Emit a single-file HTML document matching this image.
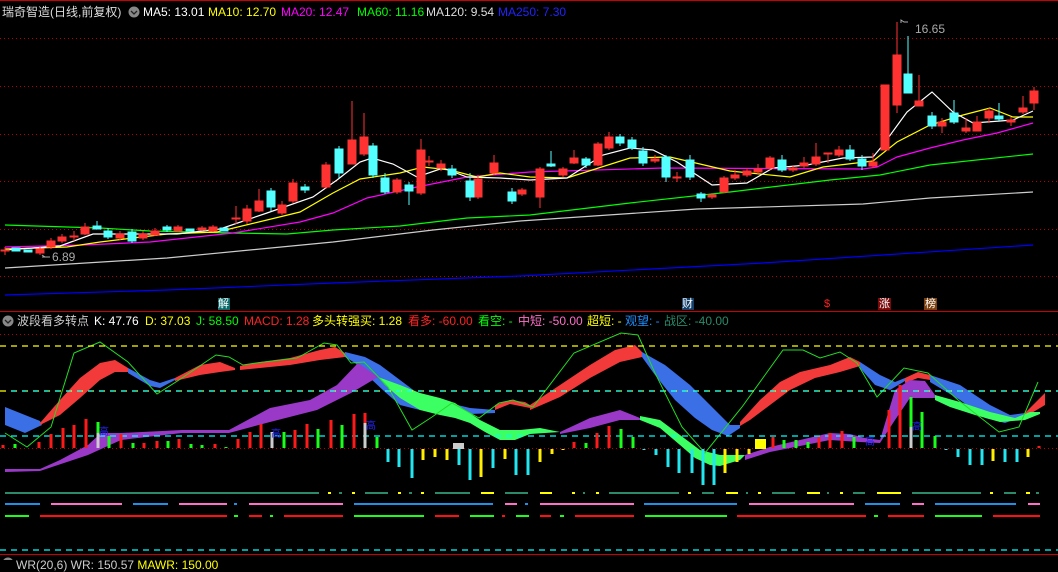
<!DOCTYPE html>
<html><head><meta charset="utf-8"><style>
html,body{margin:0;padding:0;background:#000;width:1058px;height:560px;overflow:hidden}
.t{position:absolute;font:12px "Liberation Sans","Noto Sans CJK SC",sans-serif;white-space:nowrap;line-height:14px}
svg{position:absolute;left:0;top:0}
</style></head><body>
<svg width="1058" height="560" viewBox="0 0 1058 560">
<g stroke="#b00" stroke-dasharray="1 3" stroke-width="1">
<line x1="0" y1="38.5" x2="1058" y2="38.5"/><line x1="0" y1="86.5" x2="1058" y2="86.5"/><line x1="0" y1="134.5" x2="1058" y2="134.5"/><line x1="0" y1="181.5" x2="1058" y2="181.5"/><line x1="0" y1="229.5" x2="1058" y2="229.5"/><line x1="0" y1="276.5" x2="1058" y2="276.5"/>
<line x1="0" y1="334.5" x2="1058" y2="334.5"/><line x1="0" y1="448.5" x2="1058" y2="448.5"/>
</g>
<line x1="0" y1="0.5" x2="1058" y2="0.5" stroke="#c00"/>
<line x1="0" y1="311.5" x2="1058" y2="311.5" stroke="#c00"/>
<line x1="0" y1="554.5" x2="1058" y2="554.5" stroke="#c00"/>
<g fill="none" stroke-width="1.2">
<polyline stroke="#00f" points="5,295 167,290 333,283 520,276 763,263 1033,245"/>
<polyline stroke="#ccc" points="5,268 167,258 333,242 433,230 520,221 697,209 863,204 930,198 1033,192"/>
<polyline stroke="#0f0" points="5,225 67,227 100,228 150,231 233,233 287,234 333,230 400,226 467,218 530,215 630,203 730,192 830,180 880,175 930,165 1033,154"/>
<polyline stroke="#f0f" points="5,247 83,245 150,242 233,233 300,222 333,213 367,198 417,187 467,177 530,172 663,168 863,169 877,167 897,157 930,148 963,140 997,133 1033,123"/>
<polyline stroke="#ff0" points="5,249 67,247 100,242 133,238 167,234 217,232 267,220 300,212 333,193 360,179 400,173 423,167 450,170 477,177 500,173 530,177 567,178 630,158 670,157 730,171 790,177 823,167 873,161 897,142 930,125 963,115 990,108 1013,117 1033,117"/>
<polyline stroke="#fff" points="5,250 60,246 93,234 133,234 177,234 220,229 267,213 313,197 337,180 360,162 372,158 393,164 417,177 443,168 467,177 500,178 530,180 567,178 603,155 630,148 653,150 677,162 712,185 747,183 773,168 807,165 843,158 873,157 883,145 907,112 932,92 953,112 973,123 1000,121 1013,120 1033,111"/>
</g>
<g stroke-width="1">
<g fill="#ff3232" stroke="#ff3232">
<line x1="5" y1="247" x2="5" y2="255"/><rect x="1" y="250" width="8" height="1"/>
<line x1="40" y1="247" x2="40" y2="255"/><rect x="36" y="249" width="8" height="4"/>
<line x1="51" y1="238" x2="51" y2="249"/><rect x="47" y="241" width="8" height="6"/>
<line x1="62" y1="234" x2="62" y2="243"/><rect x="58" y="237" width="8" height="4"/>
<line x1="74" y1="231" x2="74" y2="241"/><rect x="70" y="236" width="8" height="1"/>
<line x1="85" y1="223" x2="85" y2="235"/><rect x="81" y="227" width="8" height="7"/>
<line x1="120" y1="231" x2="120" y2="240"/><rect x="116" y="234" width="8" height="4"/>
<line x1="143" y1="231" x2="143" y2="240"/><rect x="139" y="234" width="8" height="4"/>
<line x1="155" y1="228" x2="155" y2="236"/><rect x="151" y="231" width="8" height="4"/>
<line x1="178" y1="225" x2="178" y2="232"/><rect x="174" y="227" width="8" height="4"/>
<line x1="202" y1="226" x2="202" y2="231"/><rect x="198" y="228" width="8" height="2"/>
<line x1="213" y1="225" x2="213" y2="232"/><rect x="209" y="227" width="8" height="4"/>
<line x1="236" y1="206" x2="236" y2="224"/><rect x="232" y="218" width="8" height="1"/>
<line x1="247" y1="205" x2="247" y2="224"/><rect x="243" y="209" width="8" height="12"/>
<line x1="259" y1="189" x2="259" y2="212"/><rect x="255" y="201" width="8" height="10"/>
<line x1="282" y1="201" x2="282" y2="215"/><rect x="278" y="205" width="8" height="8"/>
<line x1="293" y1="179" x2="293" y2="203"/><rect x="289" y="183" width="8" height="18"/>
<line x1="326" y1="162" x2="326" y2="189"/><rect x="322" y="165" width="8" height="22"/>
<line x1="352" y1="101" x2="352" y2="164"/><rect x="348" y="140" width="8" height="24"/>
<line x1="364" y1="113" x2="364" y2="156"/><rect x="360" y="137" width="8" height="17"/>
<line x1="397" y1="178" x2="397" y2="194"/><rect x="393" y="180" width="8" height="12"/>
<line x1="421" y1="139" x2="421" y2="195"/><rect x="417" y="150" width="8" height="43"/>
<line x1="429" y1="156" x2="429" y2="166"/><rect x="425" y="161" width="8" height="1"/>
<line x1="441" y1="160" x2="441" y2="171"/><rect x="437" y="164" width="8" height="4"/>
<line x1="478" y1="175" x2="478" y2="199"/><rect x="474" y="179" width="8" height="18"/>
<line x1="494" y1="155" x2="494" y2="175"/><rect x="490" y="163" width="8" height="10"/>
<line x1="522" y1="188" x2="522" y2="196"/><rect x="518" y="190" width="8" height="4"/>
<line x1="540" y1="167" x2="540" y2="208"/><rect x="536" y="169" width="8" height="28"/>
<line x1="563" y1="167" x2="563" y2="177"/><rect x="559" y="169" width="8" height="6"/>
<line x1="574" y1="150" x2="574" y2="164"/><rect x="570" y="158" width="8" height="5"/>
<line x1="598" y1="142" x2="598" y2="166"/><rect x="594" y="144" width="8" height="21"/>
<line x1="609" y1="132" x2="609" y2="150"/><rect x="605" y="137" width="8" height="11"/>
<line x1="655" y1="155" x2="655" y2="163"/><rect x="651" y="159" width="8" height="2"/>
<line x1="677" y1="172" x2="677" y2="182"/><rect x="673" y="177" width="8" height="1"/>
<line x1="712" y1="193" x2="712" y2="199"/><rect x="708" y="195" width="8" height="2"/>
<line x1="724" y1="176" x2="724" y2="193"/><rect x="720" y="178" width="8" height="14"/>
<line x1="735" y1="170" x2="735" y2="180"/><rect x="731" y="175" width="8" height="3"/>
<line x1="747" y1="168" x2="747" y2="177"/><rect x="743" y="171" width="8" height="4"/>
<line x1="758" y1="164" x2="758" y2="174"/><rect x="754" y="169" width="8" height="3"/>
<line x1="770" y1="156" x2="770" y2="170"/><rect x="766" y="158" width="8" height="10"/>
<line x1="793" y1="166" x2="793" y2="172"/><rect x="789" y="168" width="8" height="2"/>
<line x1="804" y1="157" x2="804" y2="168"/><rect x="800" y="163" width="8" height="3"/>
<line x1="816" y1="143" x2="816" y2="166"/><rect x="812" y="157" width="8" height="7"/>
<line x1="828" y1="153" x2="828" y2="163"/><rect x="824" y="153" width="8" height="1"/>
<line x1="839" y1="146" x2="839" y2="157"/><rect x="835" y="150" width="8" height="5"/>
<line x1="873" y1="153" x2="873" y2="168"/><rect x="869" y="162" width="8" height="4"/>
<line x1="885" y1="85" x2="885" y2="150"/><rect x="881" y="85" width="8" height="65"/>
<line x1="897" y1="22" x2="897" y2="113"/><rect x="893" y="55" width="8" height="50"/>
<line x1="919" y1="75" x2="919" y2="106"/><rect x="915" y="101" width="8" height="5"/>
<line x1="942" y1="118" x2="942" y2="133"/><rect x="938" y="122" width="8" height="4"/>
<line x1="966" y1="118" x2="966" y2="133"/><rect x="962" y="128" width="8" height="3"/>
<line x1="977" y1="116" x2="977" y2="131"/><rect x="973" y="122" width="8" height="9"/>
<line x1="989" y1="108" x2="989" y2="123"/><rect x="985" y="111" width="8" height="7"/>
<line x1="1011" y1="117" x2="1011" y2="126"/><rect x="1007" y="120" width="8" height="2"/>
<line x1="1023" y1="96" x2="1023" y2="114"/><rect x="1019" y="108" width="8" height="4"/>
<line x1="1034" y1="87" x2="1034" y2="110"/><rect x="1030" y="91" width="8" height="12"/>
</g>
<g fill="#54ffff" stroke="#54ffff">
<rect x="12" y="248" width="8" height="3"/><rect x="24" y="250" width="8" height="2"/>
<line x1="97" y1="221" x2="97" y2="229"/><rect x="93" y="226" width="8" height="3"/>
<line x1="108" y1="228" x2="108" y2="239"/><rect x="104" y="231" width="8" height="6"/>
<line x1="132" y1="229" x2="132" y2="243"/><rect x="128" y="232" width="8" height="9"/>
<line x1="167" y1="225" x2="167" y2="232"/><rect x="163" y="227" width="8" height="3"/>
<rect x="186" y="229" width="8" height="2"/><rect x="220" y="228" width="8" height="3"/>
<line x1="271" y1="188" x2="271" y2="211"/><rect x="267" y="191" width="8" height="16"/>
<line x1="305" y1="184" x2="305" y2="193"/><rect x="301" y="187" width="8" height="3"/>
<line x1="339" y1="146" x2="339" y2="178"/><rect x="335" y="149" width="8" height="24"/>
<line x1="373" y1="143" x2="373" y2="178"/><rect x="369" y="146" width="8" height="29"/>
<line x1="385" y1="173" x2="385" y2="194"/><rect x="381" y="178" width="8" height="14"/>
<line x1="409" y1="182" x2="409" y2="205"/><rect x="405" y="185" width="8" height="6"/>
<line x1="452" y1="165" x2="452" y2="178"/><rect x="448" y="169" width="8" height="6"/>
<line x1="470" y1="173" x2="470" y2="201"/><rect x="466" y="181" width="8" height="16"/>
<line x1="512" y1="188" x2="512" y2="204"/><rect x="508" y="192" width="8" height="9"/>
<line x1="551" y1="151" x2="551" y2="167"/><rect x="547" y="164" width="8" height="2"/>
<line x1="586" y1="157" x2="586" y2="168"/><rect x="582" y="159" width="8" height="6"/>
<line x1="620" y1="134" x2="620" y2="146"/><rect x="616" y="137" width="8" height="6"/>
<line x1="632" y1="137" x2="632" y2="150"/><rect x="628" y="140" width="8" height="8"/>
<line x1="643" y1="147" x2="643" y2="166"/><rect x="639" y="151" width="8" height="12"/>
<line x1="666" y1="155" x2="666" y2="182"/><rect x="662" y="157" width="8" height="20"/>
<line x1="690" y1="155" x2="690" y2="180"/><rect x="686" y="160" width="8" height="17"/>
<line x1="701" y1="192" x2="701" y2="202"/><rect x="697" y="194" width="8" height="4"/>
<line x1="782" y1="155" x2="782" y2="172"/><rect x="778" y="160" width="8" height="10"/>
<line x1="850" y1="145" x2="850" y2="161"/><rect x="846" y="150" width="8" height="9"/>
<line x1="862" y1="155" x2="862" y2="170"/><rect x="858" y="159" width="8" height="7"/>
<line x1="908" y1="36" x2="908" y2="93"/><rect x="904" y="74" width="8" height="19"/>
<line x1="932" y1="112" x2="932" y2="129"/><rect x="928" y="116" width="8" height="10"/>
<line x1="954" y1="100" x2="954" y2="124"/><rect x="950" y="113" width="8" height="9"/>
<line x1="999" y1="103" x2="999" y2="121"/><rect x="995" y="116" width="8" height="3"/>
</g></g>
<path d="M45 257 l-3 -2 M42 257 h8" stroke="#aaa" fill="none"/>
<path d="M901 23 v-3 l3 2 h4" stroke="#aaa" fill="none"/>
<rect x="218" y="298" width="12" height="12" fill="#0a6a6a"/>
<rect x="682" y="298" width="12" height="12" fill="#15406a"/>
<rect x="878" y="298" width="13" height="12" fill="#7a0a0a"/>
<rect x="924" y="298" width="13" height="12" fill="#7a4010"/>
<g fill="#3a6fe6">
<polygon points="5,407 40,421 42,425 25,433 5,425"/>
<polygon points="128,368 150,380 160,383 175,378 175,380 160,388 150,386 128,373"/>
<polygon points="345,352 365,357 380,365 400,380 420,395 445,402 470,408 495,410 495,413 470,414 445,413 420,410 400,405 385,392 370,378 355,363 345,357"/>
<polygon points="642,352 665,365 690,385 710,405 730,425 740,425 740,428 728,436 712,430 695,418 675,400 655,375 642,357"/>
<polygon points="860,362 880,375 895,382 905,378 905,381 890,390 875,385 860,368"/>
<polygon points="930,375 960,385 990,405 1010,415 1025,413 1025,416 1005,423 985,418 960,400 930,382"/>
</g>
<g fill="#f23a3a">
<polygon points="40,423 60,400 80,378 100,363 115,360 128,368 128,372 115,372 100,380 80,398 60,415 40,425"/>
<polygon points="175,378 200,365 220,362 235,368 235,370 220,372 200,375 175,381"/>
<polygon points="240,366 260,362 290,358 320,350 335,347 345,353 345,357 320,360 290,365 260,368 240,370"/>
<polygon points="495,405 510,400 525,402 530,405 530,408 510,404 495,410"/>
<polygon points="530,405 560,385 590,365 615,350 635,345 642,352 642,357 620,362 590,378 560,397 530,410"/>
<polygon points="740,422 760,400 780,382 800,372 830,365 850,357 860,362 860,366 840,372 815,378 790,390 770,405 750,420 740,426"/>
<polygon points="905,378 918,372 930,375 930,380 918,378 905,383"/>
<polygon points="1025,413 1045,393 1045,405 1025,417"/>
</g>
<g fill="#9a38c8">
<polygon points="5,469 40,469 60,460 88,445 101,433 121,433 182,430 229,430 270,408 310,400 337,385 358,363 378,377 351,393 317,410 270,422 229,433 182,433 121,440 88,455 40,471 5,472"/>
<polygon points="560,432 590,418 620,410 640,418 640,420 620,420 590,428 560,434"/>
<polygon points="745,455 770,447 800,440 830,433 850,434 865,438 880,440 895,390 910,380 925,381 935,395 935,398 910,398 895,420 880,443 860,442 830,440 800,446 770,452 745,460"/>
</g>
<g fill="#3cff64">
<polygon points="378,377 400,385 420,393 440,398 455,403 465,410 480,420 500,430 520,430 540,428 560,432 530,434 515,440 500,440 485,432 470,423 455,418 440,415 420,410 400,398 385,385"/>
<polygon points="640,416 660,420 680,435 700,450 720,455 745,455 740,460 720,466 710,465 695,458 680,445 660,428 640,420"/>
<polygon points="935,395 960,402 990,412 1015,418 1030,412 1040,412 1040,414 1025,420 1000,422 975,415 950,407 935,400"/>
</g>
<polyline fill="none" stroke="#22dd22" stroke-width="1" points="5,433 27,447 51,427 74,353 100,342 128,362 157,394 179,380 216,355 229,357 243,365 256,363 297,358 324,343 337,345 351,363 364,362 388,387 412,430 432,417 452,403 479,418 499,403 513,400 533,407 574,353 621,333 638,335 655,373 682,427 705,453 742,407 783,350 803,350 820,358 840,352 857,363 877,397 904,368 928,373 958,400 999,432 1019,427 1038,382"/>
<g stroke-dasharray="6 5" stroke-width="1.3">
<line x1="0" y1="346" x2="1058" y2="346" stroke="#ff0"/>
<line x1="0" y1="391" x2="1058" y2="391" stroke="#ff0"/>
<line x1="5" y1="391" x2="1058" y2="391" stroke="#0ff" stroke-dashoffset="5" stroke-dasharray="5 6"/>
<line x1="0" y1="436" x2="1058" y2="436" stroke="#0ff"/>
<line x1="0" y1="550" x2="1058" y2="550" stroke="#0ff"/>
</g>
<g stroke-width="3">
<g stroke="#ff1a1a"><line x1="3" y1="445" x2="3" y2="448"/><line x1="39" y1="442" x2="39" y2="448"/><line x1="51" y1="434" x2="51" y2="448"/><line x1="63" y1="428" x2="63" y2="448"/><line x1="74" y1="425" x2="74" y2="448"/><line x1="86" y1="419" x2="86" y2="448"/><line x1="121" y1="434" x2="121" y2="448"/><line x1="144" y1="443" x2="144" y2="448"/><line x1="157" y1="441" x2="157" y2="448"/><line x1="179" y1="439" x2="179" y2="448"/><line x1="215" y1="444" x2="215" y2="448"/><line x1="238" y1="439" x2="238" y2="448"/><line x1="250" y1="432" x2="250" y2="448"/><line x1="261" y1="424" x2="261" y2="448"/><line x1="295" y1="430" x2="295" y2="448"/><line x1="307" y1="424" x2="307" y2="448"/><line x1="331" y1="420" x2="331" y2="448"/><line x1="354" y1="414" x2="354" y2="448"/><line x1="365" y1="413" x2="365" y2="448"/><line x1="574" y1="442" x2="574" y2="448"/><line x1="597" y1="433" x2="597" y2="448"/><line x1="609" y1="426" x2="609" y2="448"/><line x1="773" y1="437" x2="773" y2="448"/><line x1="819" y1="437" x2="819" y2="448"/><line x1="830" y1="433" x2="830" y2="448"/><line x1="842" y1="431" x2="842" y2="448"/><line x1="889" y1="410" x2="889" y2="448"/><line x1="900" y1="385" x2="900" y2="448"/><line x1="1039" y1="446" x2="1039" y2="448"/></g>
<g stroke="#1aff1a"><line x1="15" y1="444" x2="15" y2="448"/><line x1="98" y1="422" x2="98" y2="448"/><line x1="109" y1="436" x2="109" y2="448"/><line x1="133" y1="443" x2="133" y2="448"/><line x1="168" y1="441" x2="168" y2="448"/><line x1="191" y1="444" x2="191" y2="448"/><line x1="202" y1="445" x2="202" y2="448"/><line x1="226" y1="447" x2="226" y2="448"/><line x1="284" y1="432" x2="284" y2="448"/><line x1="318" y1="429" x2="318" y2="448"/><line x1="342" y1="425" x2="342" y2="448"/><line x1="377" y1="437" x2="377" y2="448"/><line x1="586" y1="443" x2="586" y2="448"/><line x1="621" y1="429" x2="621" y2="448"/><line x1="633" y1="437" x2="633" y2="448"/><line x1="784" y1="440" x2="784" y2="448"/><line x1="796" y1="440" x2="796" y2="448"/><line x1="808" y1="442" x2="808" y2="448"/><line x1="854" y1="437" x2="854" y2="448"/><line x1="911" y1="397" x2="911" y2="448"/><line x1="922" y1="412" x2="922" y2="448"/><line x1="935" y1="436" x2="935" y2="448"/></g>
<g stroke="#ccc"><line x1="98" y1="433" x2="98" y2="448"/><line x1="272" y1="432" x2="272" y2="448"/><line x1="365" y1="423" x2="365" y2="448"/><line x1="911" y1="427" x2="911" y2="448"/></g>
<g stroke="#22e6f0"><line x1="388" y1="449" x2="388" y2="462"/><line x1="399" y1="449" x2="399" y2="467"/><line x1="412" y1="449" x2="412" y2="478"/><line x1="459" y1="449" x2="459" y2="465"/><line x1="470" y1="449" x2="470" y2="480"/><line x1="493" y1="449" x2="493" y2="468"/><line x1="516" y1="449" x2="516" y2="475"/><line x1="528" y1="449" x2="528" y2="475"/><line x1="644" y1="449" x2="644" y2="450"/><line x1="656" y1="449" x2="656" y2="455"/><line x1="668" y1="449" x2="668" y2="467"/><line x1="679" y1="449" x2="679" y2="473"/><line x1="692" y1="449" x2="692" y2="473"/><line x1="703" y1="449" x2="703" y2="485"/><line x1="714" y1="449" x2="714" y2="485"/><line x1="946" y1="449" x2="946" y2="450"/><line x1="958" y1="449" x2="958" y2="457"/><line x1="970" y1="449" x2="970" y2="465"/><line x1="982" y1="449" x2="982" y2="465"/><line x1="1005" y1="449" x2="1005" y2="462"/><line x1="1017" y1="449" x2="1017" y2="462"/></g>
<g stroke="#ffee00"><line x1="423" y1="449" x2="423" y2="460"/><line x1="435" y1="449" x2="435" y2="457"/><line x1="447" y1="449" x2="447" y2="460"/><line x1="481" y1="449" x2="481" y2="477"/><line x1="505" y1="449" x2="505" y2="459"/><line x1="540" y1="449" x2="540" y2="462"/><line x1="552" y1="449" x2="552" y2="454"/><line x1="563" y1="449" x2="563" y2="450"/><line x1="725" y1="449" x2="725" y2="473"/><line x1="737" y1="449" x2="737" y2="462"/><line x1="749" y1="449" x2="749" y2="454"/><line x1="993" y1="449" x2="993" y2="461"/><line x1="1028" y1="449" x2="1028" y2="457"/></g>
</g>
<rect x="453" y="443" width="11" height="6" fill="#ccc"/>
<rect x="755" y="439" width="11" height="10" fill="#ff0"/>
<g stroke-width="2">
<g stroke="#2a8a6a"><line x1="5" y1="493" x2="319" y2="493"/><line x1="339" y1="493" x2="342" y2="493"/><line x1="365" y1="493" x2="388" y2="493"/><line x1="409" y1="493" x2="412" y2="493"/><line x1="435" y1="493" x2="470" y2="493"/><line x1="505" y1="493" x2="528" y2="493"/><line x1="583" y1="493" x2="585" y2="493"/><line x1="609" y1="493" x2="679" y2="493"/><line x1="702" y1="493" x2="714" y2="493"/><line x1="746" y1="493" x2="748" y2="493"/><line x1="772" y1="493" x2="795" y2="493"/><line x1="827" y1="493" x2="829" y2="493"/><line x1="853" y1="493" x2="865" y2="493"/><line x1="912" y1="493" x2="981" y2="493"/><line x1="1004" y1="493" x2="1016" y2="493"/><line x1="1036" y1="493" x2="1039" y2="493"/></g>
<g stroke="#ff0"><line x1="328" y1="493" x2="331" y2="493"/><line x1="352" y1="493" x2="355" y2="493"/><line x1="398" y1="493" x2="401" y2="493"/><line x1="421" y1="493" x2="424" y2="493"/><line x1="481" y1="493" x2="494" y2="493"/><line x1="540" y1="493" x2="552" y2="493"/><line x1="572" y1="493" x2="575" y2="493"/><line x1="596" y1="493" x2="599" y2="493"/><line x1="688" y1="493" x2="691" y2="493"/><line x1="726" y1="493" x2="738" y2="493"/><line x1="758" y1="493" x2="761" y2="493"/><line x1="807" y1="493" x2="820" y2="493"/><line x1="840" y1="493" x2="843" y2="493"/><line x1="877" y1="493" x2="901" y2="493"/><line x1="990" y1="493" x2="993" y2="493"/><line x1="1026" y1="493" x2="1030" y2="493"/></g>
<g stroke="#1e90e6"><line x1="5" y1="504" x2="40" y2="504"/><line x1="133" y1="504" x2="168" y2="504"/><line x1="234" y1="504" x2="237" y2="504"/><line x1="354" y1="504" x2="493" y2="504"/><line x1="525" y1="504" x2="528" y2="504"/><line x1="644" y1="504" x2="737" y2="504"/><line x1="865" y1="504" x2="900" y2="504"/><line x1="935" y1="504" x2="1016" y2="504"/></g>
<g stroke="#ff6ec8"><line x1="51" y1="504" x2="122" y2="504"/><line x1="179" y1="504" x2="227" y2="504"/><line x1="249" y1="504" x2="343" y2="504"/><line x1="505" y1="504" x2="517" y2="504"/><line x1="540" y1="504" x2="634" y2="504"/><line x1="749" y1="504" x2="854" y2="504"/><line x1="912" y1="504" x2="924" y2="504"/><line x1="1028" y1="504" x2="1040" y2="504"/></g>
<g stroke="#1aff1a"><line x1="5" y1="516" x2="29" y2="516"/><line x1="234" y1="516" x2="238" y2="516"/><line x1="270" y1="516" x2="273" y2="516"/><line x1="354" y1="516" x2="424" y2="516"/><line x1="470" y1="516" x2="494" y2="516"/><line x1="516" y1="516" x2="529" y2="516"/><line x1="560" y1="516" x2="564" y2="516"/><line x1="645" y1="516" x2="727" y2="516"/><line x1="874" y1="516" x2="878" y2="516"/><line x1="935" y1="516" x2="982" y2="516"/></g>
<g stroke="#ff1010"><line x1="40" y1="516" x2="227" y2="516"/><line x1="249" y1="516" x2="262" y2="516"/><line x1="284" y1="516" x2="343" y2="516"/><line x1="435" y1="516" x2="459" y2="516"/><line x1="502" y1="516" x2="505" y2="516"/><line x1="540" y1="516" x2="551" y2="516"/><line x1="575" y1="516" x2="634" y2="516"/><line x1="737" y1="516" x2="866" y2="516"/><line x1="888" y1="516" x2="924" y2="516"/><line x1="993" y1="516" x2="1040" y2="516"/></g>
</g>
<circle cx="134" cy="12" r="5.5" fill="#888"/><path d="M131 11 l3 3 l3 -3" stroke="#222" stroke-width="1.3" fill="none"/>
<circle cx="8" cy="321" r="5.5" fill="#888"/><path d="M5 320 l3 3 l3 -3" stroke="#222" stroke-width="1.3" fill="none"/>
<circle cx="8" cy="563" r="5.5" fill="#888"/>
</svg>
<div class="t" style="left:2px;top:5px;color:#ddd">瑞奇智造(日线,前复权)</div>
<div class="t" style="left:143px;top:5px;color:#fff">MA5: 13.01</div>
<div class="t" style="left:208px;top:5px;color:#ff0">MA10: 12.70</div>
<div class="t" style="left:281px;top:5px;color:#f0f">MA20: 12.47</div>
<div class="t" style="left:357px;top:5px;color:#0f0">MA60: 11.16</div>
<div class="t" style="left:426px;top:5px;color:#ddd">MA120: 9.54</div>
<div class="t" style="left:498px;top:5px;color:#22f">MA250: 7.30</div>
<div class="t" style="left:52px;top:250px;color:#aaa">6.89</div>
<div class="t" style="left:915px;top:22px;color:#aaa">16.65</div>
<div class="t" style="left:218px;top:297px;color:#fff;font-size:11px">解</div>
<div class="t" style="left:682px;top:297px;color:#fff;font-size:11px">财</div>
<div class="t" style="left:824px;top:297px;color:#f22;font-size:11px">$</div>
<div class="t" style="left:879px;top:297px;color:#fff;font-size:11px">涨</div>
<div class="t" style="left:925px;top:297px;color:#fff;font-size:11px">榜</div>
<div class="t" style="left:17px;top:314px;color:#ccc">波段看多转点</div>
<div class="t" style="left:94px;top:314px;color:#fff">K: 47.76</div>
<div class="t" style="left:145px;top:314px;color:#ff0">D: 37.03</div>
<div class="t" style="left:196px;top:314px;color:#0f0">J: 58.50</div>
<div class="t" style="left:244px;top:314px;color:#f22">MACD: 1.28</div>
<div class="t" style="left:312px;top:314px;color:#ff0">多头转强买: 1.28</div>
<div class="t" style="left:408px;top:314px;color:#f22">看多: -60.00</div>
<div class="t" style="left:478px;top:314px;color:#0f0">看空: -</div>
<div class="t" style="left:518px;top:314px;color:#ff6ec8">中短: -50.00</div>
<div class="t" style="left:587px;top:314px;color:#ff0">超短: -</div>
<div class="t" style="left:625px;top:314px;color:#1e90ff">观望: -</div>
<div class="t" style="left:664px;top:314px;color:#2a8a6a">战区: -40.00</div>
<div class="t" style="left:99px;top:426px;color:#22f;font-size:10px">高</div>
<div class="t" style="left:271px;top:428px;color:#22f;font-size:10px">高</div>
<div class="t" style="left:366px;top:420px;color:#22f;font-size:10px">高</div>
<div class="t" style="left:865px;top:436px;color:#22f;font-size:10px">高</div>
<div class="t" style="left:912px;top:421px;color:#22f;font-size:10px">高</div>
<div class="t" style="left:16px;top:558px;color:#ccc">WR(20,6) WR: 150.57 <span style="color:#ff0">MAWR: 150.00</span></div>
</body></html>
